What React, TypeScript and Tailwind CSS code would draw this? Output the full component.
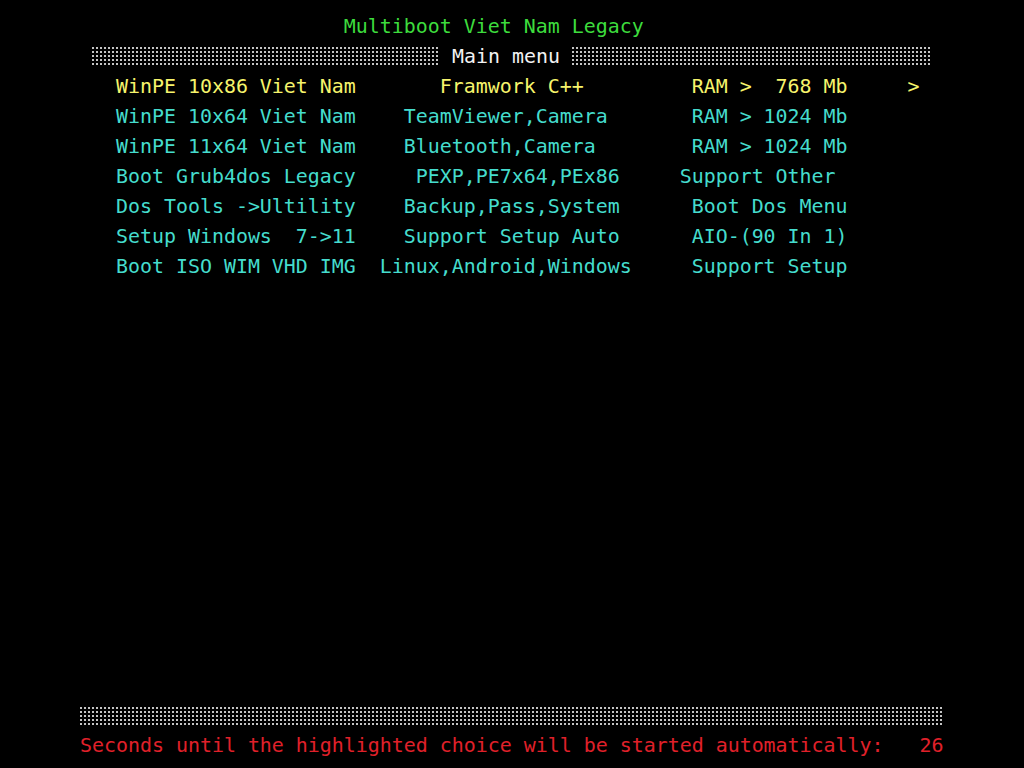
import React from "react";

type Part = [number, string];

function compose(parts: Part[]): string {
  let s = "";
  for (const [col, text] of parts) {
    while (s.length < col) s += " ";
    s += text;
  }
  return s;
}

const rows: { parts: Part[]; hl?: boolean }[] = [
  { parts: [[9, "WinPE 10x86 Viet Nam"], [36, "Framwork C++"], [57, "RAM >  768 Mb"], [75, ">"]], hl: true },
  { parts: [[9, "WinPE 10x64 Viet Nam"], [33, "TeamViewer,Camera"], [57, "RAM > 1024 Mb"]] },
  { parts: [[9, "WinPE 11x64 Viet Nam"], [33, "Bluetooth,Camera"], [57, "RAM > 1024 Mb"]] },
  { parts: [[9, "Boot Grub4dos Legacy"], [34, "PEXP,PE7x64,PEx86"], [56, "Support Other"]] },
  { parts: [[9, "Dos Tools ->Ultility"], [33, "Backup,Pass,System"], [57, "Boot Dos Menu"]] },
  { parts: [[9, "Setup Windows  7->11"], [33, "Support Setup Auto"], [57, "AIO-(90 In 1)"]] },
  { parts: [[9, "Boot ISO WIM VHD IMG"], [31, "Linux,Android,Windows"], [57, "Support Setup"]] },
];

function Band({ className }: { className: string }) {
  return (
    <div
      className={
        "h-[18px] bg-[conic-gradient(from_270deg_at_2px_2px,#c4c4c4_25%,transparent_0)] bg-[length:4px_4px] " +
        className
      }
    />
  );
}

export default function App() {
  return (
    <div
      className="w-full h-[768px] bg-black flex flex-col pt-[12px] pb-[7px] pl-[8px] text-[19.93px] leading-[30px] whitespace-pre overflow-hidden"
      style={{ fontFamily: '"DejaVu Sans Mono", "Liberation Mono", monospace' }}
    >
      <div className="h-[30px] text-[#3ddc3d]">{compose([[28, "Multiboot Viet Nam Legacy"]])}</div>
      <div className="h-[30px] flex items-start pl-[84px]">
        <Band className="w-[348px] mt-[5px]" />
        <span className="text-[#f2f2f2]"> Main menu </span>
        <Band className="w-[360px] mt-[5px]" />
      </div>
      {rows.map((r, i) => (
        <div key={i} className={"h-[30px] " + (r.hl ? "text-[#f6f46c]" : "text-[#45dccd]")}>
          {compose(r.parts)}
        </div>
      ))}
      <div className="mt-auto h-[30px] pl-[72px]">
        <Band className="w-[864px] mt-[6px]" />
      </div>
      <div className="h-[30px] text-[#e0202a]">
        {compose([[6, "Seconds until the highlighted choice will be started automatically:   26"]])}
      </div>
    </div>
  );
}
